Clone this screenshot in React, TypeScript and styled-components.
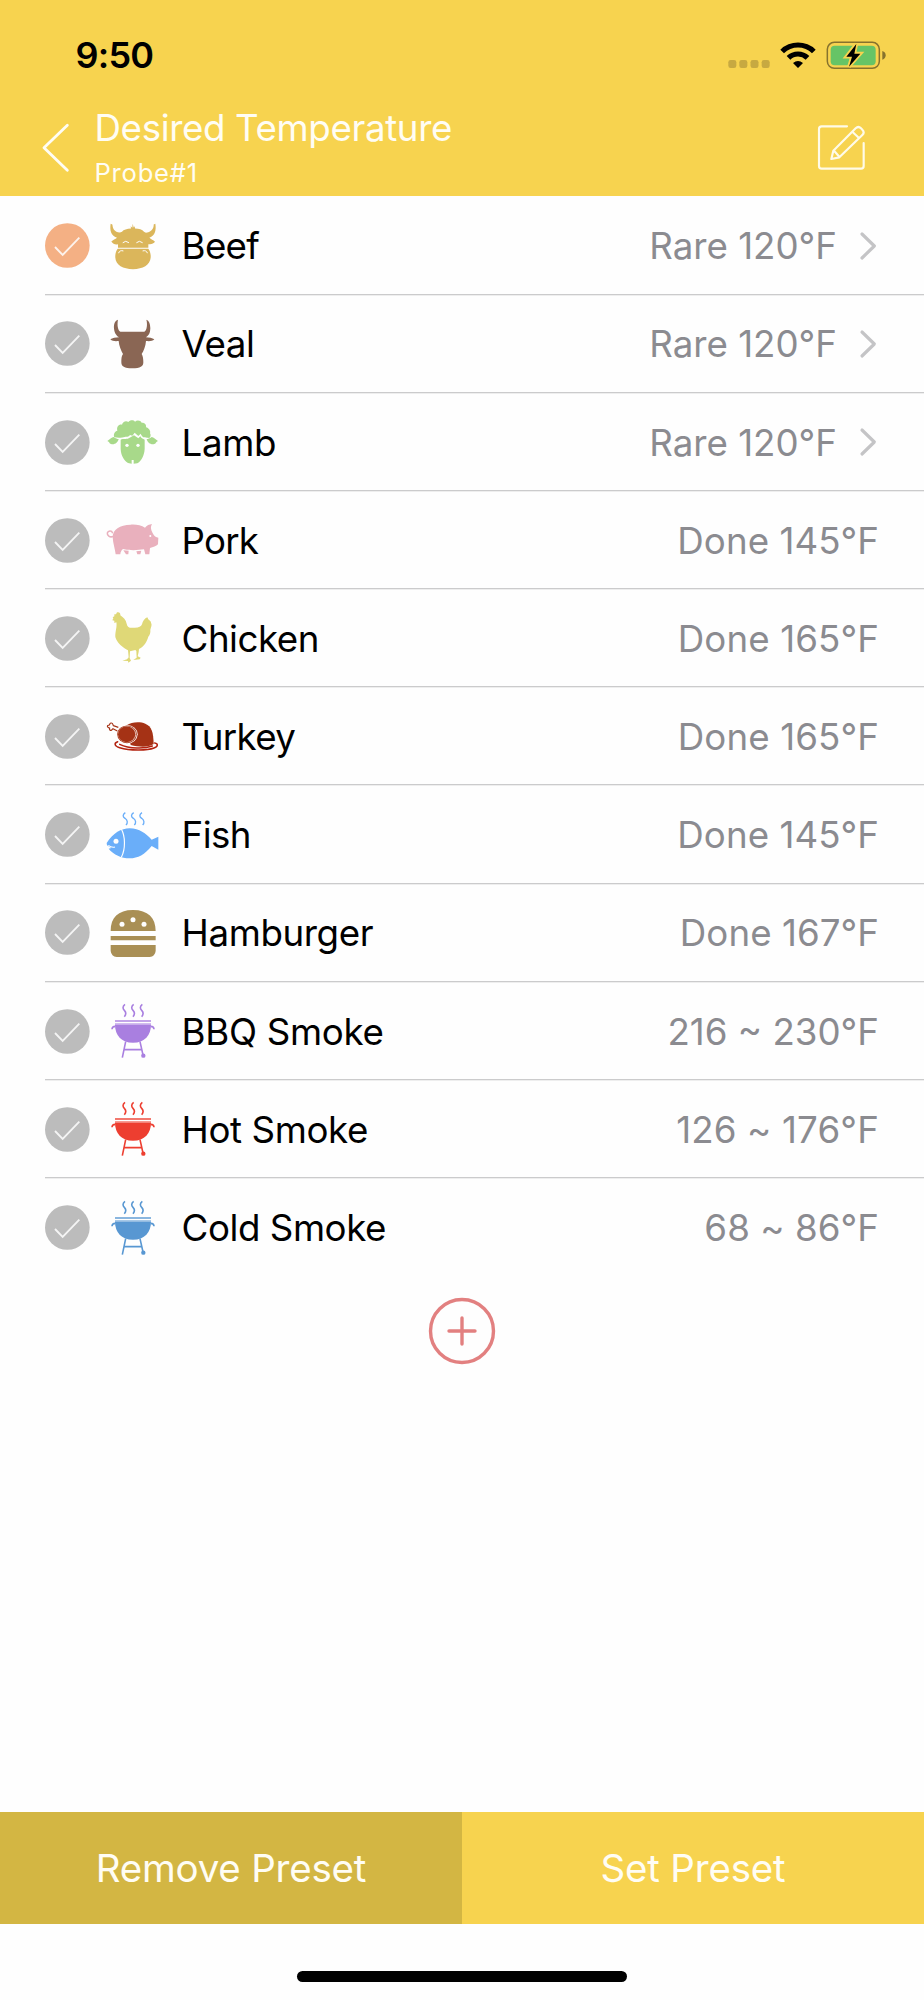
import React from 'react';
import styled, { createGlobalStyle } from 'styled-components';

const GlobalStyle = createGlobalStyle`
  *, *::before, *::after { box-sizing: border-box; }
  body { margin: 0; background: #fefefe; }
  svg { display: block; flex: none; }
`;

const YELLOW = '#f7d34f';

const Screen = styled.div`
  display: flex;
  flex-direction: column;
  width: 924px;
  height: 2000px;
  overflow: hidden;
  background: #fefefe;
  color: #000;
  font-family: Inter, "Liberation Sans", sans-serif;
`;

const Header = styled.header`
  flex: none;
  height: 196.4px;
  background: ${YELLOW};
`;

const StatusBar = styled.div`
  display: flex;
  align-items: center;
  justify-content: space-between;
  height: 105px;
  padding: 5px 37px 0 75.5px;
`;

const Clock = styled.span`
  font-size: 36px;
  font-weight: 600;
  letter-spacing: -0.8px;
  line-height: 44px;
`;

const NavBar = styled.div`
  display: flex;
  align-items: center;
  height: 90px;
  padding: 0 57px 0 40.5px;
`;

const Titles = styled.div`
  flex: 1;
  display: flex;
  flex-direction: column;
  padding-left: 22px;
  color: #fffdf4;
`;

const Title = styled.h1`
  margin: 0;
  font-size: 36.7px;
  font-weight: 400;
  line-height: 45px;
  letter-spacing: -0.36px;
`;

const Subtitle = styled.span`
  font-size: 25.6px;
  line-height: 45px;
  letter-spacing: 0.75px;
`;

const IconButton = styled.button`
  display: flex;
  padding: 0;
  border: 0;
  background: none;
`;

const PresetList = styled.ul`
  flex: none;
  margin: 0;
  padding: 0 0 0 45px;
  list-style: none;
`;

const PresetRow = styled.li`
  display: flex;
  align-items: center;
  height: 98.18px;
  padding: 1.6px 45px 0 0;
  &:not(:last-child) {
    border-bottom: 1px solid #cbcbcc;
    box-shadow: 0 1px 0 #eeeeee;
  }
`;

const IconSlot = styled.span`
  display: flex;
  margin: 0 21.6px 0 16px;
`;

const Name = styled.span<{ $spacing: number }>`
  flex: 1;
  font-size: 36.7px;
  letter-spacing: ${(p) => p.$spacing}px;
`;

const Value = styled.span<{ $spacing: number }>`
  color: #8b8b90;
  font-size: 36.7px;
  letter-spacing: ${(p) => p.$spacing}px;
`;

const Disclosure = styled.span`
  display: flex;
  margin: 0 1.5px 0 20.5px;
`;

const AddArea = styled.div`
  flex: 1;
  display: flex;
  justify-content: center;
  align-items: flex-start;
  padding-top: 20px;
`;

const Actions = styled.div`
  flex: none;
  display: flex;
  height: 111.4px;
`;

const ActionButton = styled.button<{ $muted?: boolean }>`
  flex: 1;
  padding: 0;
  border: 0;
  background: ${(p) => (p.$muted ? '#d3b643' : YELLOW)};
  color: #fffdf4;
  font: 400 38.5px Inter, "Liberation Sans", sans-serif;
  letter-spacing: -0.2px;
`;

const HomeArea = styled.div`
  flex: none;
  display: flex;
  justify-content: center;
  align-items: flex-start;
  height: 76.4px;
  padding-top: 47px;
`;

const HomeIndicator = styled.div`
  width: 330px;
  height: 11px;
  border-radius: 6px;
  background: #000;
`;

/* Animal and food drawings share a 162 x 180 canvas, three units per pixel. */
function Glyph({ top, color, children }: { top: number; color: string; children: React.ReactNode }) {
  return (
    <svg width="54" height="60" viewBox={`229 ${top} 162 180`} fill={color} stroke="none">
      {children}
    </svg>
  );
}

const Beef = () => (
  <Glyph top={58.5} color="#dbb65b">
    <path d="M243 82C240 100 243 117 262 124C257 129 250 130 245 135C250 143 258 145 265 143V153.500H356V143C364 145 372 142 376 136C371 130 364 129 359 124C377 117 380 100 377 82L372 84C373 95 366 104 356 107C350 109 346 109 343 106C338 98 328 96 316 96L315 89L312 93L309 82L308 94L303 89L304 96C292 97 282 99 277 106C270 110 258 107 253 100C249 94 249 88 248 84Z" />
    <path d="M264 156.500H356C361 163 364 173 363 184C361 206 340 218 310 218C280 218 258 206 257 184C256 173 259 163 264 156.500Z" />
    <path d="M280 138Q288 130 297 138M321 138Q329 130 338 138M267 169Q270 160 280 163M353 169Q350 160 340 163" fill="none" stroke="#fefefe" strokeWidth="3" strokeLinecap="round" />
  </Glyph>
);

const Veal = () => (
  <Glyph top={353} color="#8a6654">
    <path d="M265 370C256 372 252 384 253 396C254 412 262 420 268 423C258 423 248 425 242 429C248 435 258 435 267 434C268 450 275 464 280 473C275 480 275 488 275 498C275 511 284 516 308 516C332 516 341 511 341 498C341 488 340 480 336 473C342 464 348 450 349 434C358 435 368 435 374 429C368 425 358 423 349 423C357 418 362 410 362 396C362 384 358 372 350 370C354 382 352 402 344 406H272C264 402 262 384 265 370Z" />
  </Glyph>
);

const Lamb = () => (
  <Glyph top={54} color="#a8d98a">
    <path d="M254 130C250 120 256 112 263 110C260 98 268 90 277 92C279 82 290 79 296 84C301 77 312 77 316 83C322 77 333 79 336 86C345 85 351 92 349 100C358 102 364 112 361 118C365 124 362 132 358 132C354 130 350 132 346 130C340 131 335 125 333 119L326 126L315 116L308 125L301 123C296 131 290 127 285 129C278 132 262 132 254 130Z" />
    <path d="M273 137C280 133 290 137 297 133L304 129L313 124L326 133L332 127C336 134 340 135 345 137V165C344 185 334 203 323 208L312 209V198H306V209L295 207C283 200 274 185 273 165Z" />
    <path d="M233 141C240 136 246 130 252 129C258 134 263 135 267 135C265 146 254 153 244 150C238 148 240 144 233 141ZM385 141C378 136 372 130 366 129C360 134 355 135 351 135C353 146 364 153 374 150C380 148 378 144 385 141Z" />
    <g fill="#fefefe"><circle cx="292" cy="154" r="5" /><circle cx="325" cy="154" r="5" /></g>
  </Glyph>
);

const Pork = () => (
  <Glyph top={349} color="#e9b0bd">
    <path d="M249 430C249 408 270 393 303 393C320 392 335 395 346 402C351 395 359 392 367 391C363 398 363 404 366 412C369 419 373 428 379 430L386 432L385 452C380 458 370 460 361 463L359 482H347L343 467C325 470 298 471 280 466C275 470 272 476 272 482H258C256 465 250 450 249 430Z" />
    <path d="M281 470L297 471L296 482H289ZM320 473L335 471L332 482H323Z" />
    <path d="M251 428C240 433 232 425 233 418C235 410 247 410 248 417" fill="none" stroke="#e9b0bd" strokeWidth="4.5" strokeLinecap="round" />
    <circle cx="362" cy="427" r="3" fill="#fefefe" />
  </Glyph>
);

const Chicken = () => (
  <Glyph top={55} color="#dfd877">
    <path d="M262 68C268 66 273 70 272 77C281 84 289 90 291 102C293 113 300 115 310 114C326 115 334 112 337 104C339 94 345 86 353 83C356 87 354 89 359 91C360 94 365 95 364 99C368 104 364 112 362 120C363 128 361 135 356 141C352 155 344 170 328 178L327 187L324 200L333 204L330 209L311 211L321 204L320 184L317 181L301 185L300 205L304 213L296 219L295 214L278 213L292 209L297 203L295 182C280 174 262 160 257 142C256 128 263 110 260 98L254 100L254 93L248 92L251 86L249 83L254 80L254 74L259 74Z" />
  </Glyph>
);

const Turkey = () => (
  <Glyph top={350} color="#a53215">
    <path d="M291 405C305 395 330 393 347 400C366 408 371 425 372 461C355 472 328 470 303 464Z" />
    <ellipse cx="292" cy="432" rx="32" ry="28" fill="#fefefe" />
    <ellipse cx="292" cy="432" rx="29.5" ry="26.5" />
    <ellipse cx="292" cy="432" rx="27.5" ry="24.5" fill="#e9c9bf" />
    <ellipse cx="291" cy="432" rx="26" ry="23.5" />
    <path d="M266 411L251 406C249 400 249 397 244 398C240 399 240 403 239 404C234 404 232 407 234 410C236 413 239 412 240 413C238 418 242 422 246 419L250 415L263 422" fill="#fefefe" stroke="#a53215" strokeWidth="3.5" strokeLinejoin="round" />
    <path d="M264 454C252 458 254 468 270 472C300 481 352 481 373 473C386 468 386 460 375 458M270 462C300 476 345 476 368 467" fill="none" stroke="#b3220f" strokeWidth="4.5" strokeLinecap="round" />
  </Glyph>
);

const Fish = () => (
  <Glyph top={56} color="#6aaef9">
    <path d="M231 170C250 140 275 126 300 126C330 126 348 142 366 160L386 151V190L366 179C345 205 325 216 300 216C275 216 252 205 237 187L245 185L232 177Z" />
    <path d="M275 128C287 150 288 187 275 213M236 177Q246 185 256 182" fill="none" stroke="#fefefe" strokeWidth="3.5" />
    <circle cx="259" cy="165" r="7.5" fill="#fefefe" />
    <path d="M287 79C278 85 279 91 286 96C294 102 295 109 289 116M312 79C303 85 304 91 311 96C319 102 320 109 314 116M337 79C328 85 329 91 336 96C344 102 345 109 339 116" fill="none" stroke="#6aaef9" strokeWidth="4" />
  </Glyph>
);

const Hamburger = () => (
  <Glyph top={351} color="#a98f55">
    <path d="M243 435C243 395 265 372 310 372C355 372 378 395 378 435ZM243 450H378V463H243ZM243 477H378V495Q376 512 360 513H261Q245 512 243 495Z" />
    <g fill="#fefefe"><circle cx="277" cy="415" r="7.5" /><circle cx="310" cy="401" r="7.5" /><circle cx="343" cy="415" r="7.5" /></g>
  </Glyph>
);

const Grill = ({ color }: { color: string }) => (
  <Glyph top={64} color={color}>
    <path d="M256 135H364C364 166 345 189 310 189C275 189 256 166 256 135Z" />
    <path d="M256 121H364V127H256ZM256 131H364V135H256Z" opacity="0.7" />
    <circle cx="341" cy="228" r="6.5" />
    <g fill="none" stroke={color} strokeWidth="4.8">
      <path d="M286 74C278 80 279 87 284 92C290 98 289 105 284 111M312 74C304 80 305 87 310 92C316 98 315 105 310 111M338 74C330 80 331 87 336 92C342 98 341 105 336 111" />
      <path d="M257 140Q247 140 247 149M363 140Q373 140 373 149M288 186L278 234M331 186L340 226M283 210H337" />
    </g>
  </Glyph>
);

const CheckMark = ({ selected }: { selected?: boolean }) => (
  <svg width="45" height="45" viewBox="45 81 135 135">
    <circle cx="112" cy="148.5" r="67" fill={selected ? '#f4b084' : '#bcbcbc'} />
    <path d="M75 153L98 177L148 125" fill="none" stroke="#fefefe" strokeOpacity="0.85" strokeWidth="5.5" />
  </svg>
);

const Chevron = () => (
  <svg width="20" height="30" viewBox="698 104 60 90">
    <path d="M710 113L747 149L710 185" fill="none" stroke="#c4c4c6" strokeWidth="9.5" strokeLinecap="round" strokeLinejoin="round" />
  </svg>
);

const StatusIcons = () => (
  <svg width="159" height="30" viewBox="145 60 477 90">
    <g fill="#c7a941">
      <rect x="146" y="120" width="24" height="24" rx="7" />
      <rect x="179" y="120" width="24" height="24" rx="7" />
      <rect x="212.500" y="120" width="24" height="24" rx="7" />
      <rect x="246" y="120" width="24" height="24" rx="7" />
    </g>
    <path d="M302 89A76 76 0 0 1 408 89L397 100A60 60 0 0 0 313 100ZM321 108A49 49 0 0 1 389 108L378 119A33 33 0 0 0 332 119ZM340 129Q355 117 370 129L355 144Z" />
    <rect x="443" y="67" width="156" height="78" rx="21" fill="none" stroke="#86722d" strokeWidth="4.5" />
    <rect x="453" y="77" width="135" height="59" rx="12" fill="#66c466" />
    <path d="M608 93Q618 96 618 106Q618 116 608 119Z" fill="#86722d" />
    <path d="M530 72L500 110H517L508 140L542 101H524Z" stroke={YELLOW} strokeWidth="11" />
    <path d="M530 72L500 110H517L508 140L542 101H524Z" />
  </svg>
);

const BackIcon = () => (
  <svg width="32" height="54" viewBox="123 368 96 162">
    <path d="M202 375L132 442L202 510" fill="none" stroke="#fffdf4" strokeWidth="8.5" strokeLinecap="round" strokeLinejoin="round" />
  </svg>
);

const EditIcon = () => (
  <svg width="50" height="50" viewBox="411 315 150 150" overflow="visible">
    <g fill="none" stroke="#fffbe8" strokeWidth="6.5" strokeLinecap="round" strokeLinejoin="round">
      <path d="M501 319H425Q417 319 417 327V438Q417 446 425 446H543Q551 446 551 438V369" />
      <path d="M454 417L460 392L527 325Q535 317 543 325L547 329Q555 337 547 345L478 412ZM517 335L537 354M462 392L478 410" />
    </g>
  </svg>
);

const AddIcon = () => (
  <svg width="70" height="70" viewBox="0 0 70 70" fill="none" stroke="#e28080" strokeLinecap="round">
    <circle cx="35" cy="35" r="31.500" strokeWidth="3.4" />
    <path d="M22 35H48M35 22V48" strokeWidth="3.4" />
  </svg>
);

interface Preset {
  name: string;
  nameSpacing: number;
  value: string;
  valueSpacing: number;
  icon: React.ReactNode;
  selected?: boolean;
  hasOptions?: boolean;
}

const presets: Preset[] = [
  { name: 'Beef', nameSpacing: -0.7, value: 'Rare 120°F', valueSpacing: 0, icon: <Beef />, selected: true, hasOptions: true },
  { name: 'Veal', nameSpacing: -0.5, value: 'Rare 120°F', valueSpacing: 0, icon: <Veal />, hasOptions: true },
  { name: 'Lamb', nameSpacing: -0.35, value: 'Rare 120°F', valueSpacing: 0, icon: <Lamb />, hasOptions: true },
  { name: 'Pork', nameSpacing: -0.8, value: 'Done 145°F', valueSpacing: 0.05, icon: <Pork /> },
  { name: 'Chicken', nameSpacing: -0.5, value: 'Done 165°F', valueSpacing: 0.1, icon: <Chicken /> },
  { name: 'Turkey', nameSpacing: -0.7, value: 'Done 165°F', valueSpacing: 0.1, icon: <Turkey /> },
  { name: 'Fish', nameSpacing: -0.6, value: 'Done 145°F', valueSpacing: 0.05, icon: <Fish /> },
  { name: 'Hamburger', nameSpacing: -0.4, value: 'Done 167°F', valueSpacing: 0.05, icon: <Hamburger /> },
  { name: 'BBQ Smoke', nameSpacing: -0.3, value: '216 ~ 230°F', valueSpacing: 0, icon: <Grill color="#a97fe0" /> },
  { name: 'Hot Smoke', nameSpacing: -0.4, value: '126 ~ 176°F', valueSpacing: 0.15, icon: <Grill color="#ed3e30" /> },
  { name: 'Cold Smoke', nameSpacing: -0.45, value: '68 ~ 86°F', valueSpacing: 0.05, icon: <Grill color="#5897d2" /> },
];

export default function App() {
  return (
    <Screen>
      <GlobalStyle />
      <Header>
        <StatusBar>
          <Clock>9:50</Clock>
          <StatusIcons />
        </StatusBar>
        <NavBar>
          <IconButton aria-label="Back"><BackIcon /></IconButton>
          <Titles>
            <Title>Desired Temperature</Title>
            <Subtitle>Probe#1</Subtitle>
          </Titles>
          <IconButton aria-label="Edit"><EditIcon /></IconButton>
        </NavBar>
      </Header>
      <PresetList>
        {presets.map((p) => (
          <PresetRow key={p.name}>
            <CheckMark selected={p.selected} />
            <IconSlot>{p.icon}</IconSlot>
            <Name $spacing={p.nameSpacing}>{p.name}</Name>
            <Value $spacing={p.valueSpacing}>{p.value}</Value>
            {p.hasOptions && <Disclosure><Chevron /></Disclosure>}
          </PresetRow>
        ))}
      </PresetList>
      <AddArea>
        <IconButton aria-label="Add preset"><AddIcon /></IconButton>
      </AddArea>
      <Actions>
        <ActionButton $muted>Remove Preset</ActionButton>
        <ActionButton>Set Preset</ActionButton>
      </Actions>
      <HomeArea><HomeIndicator /></HomeArea>
    </Screen>
  );
}
